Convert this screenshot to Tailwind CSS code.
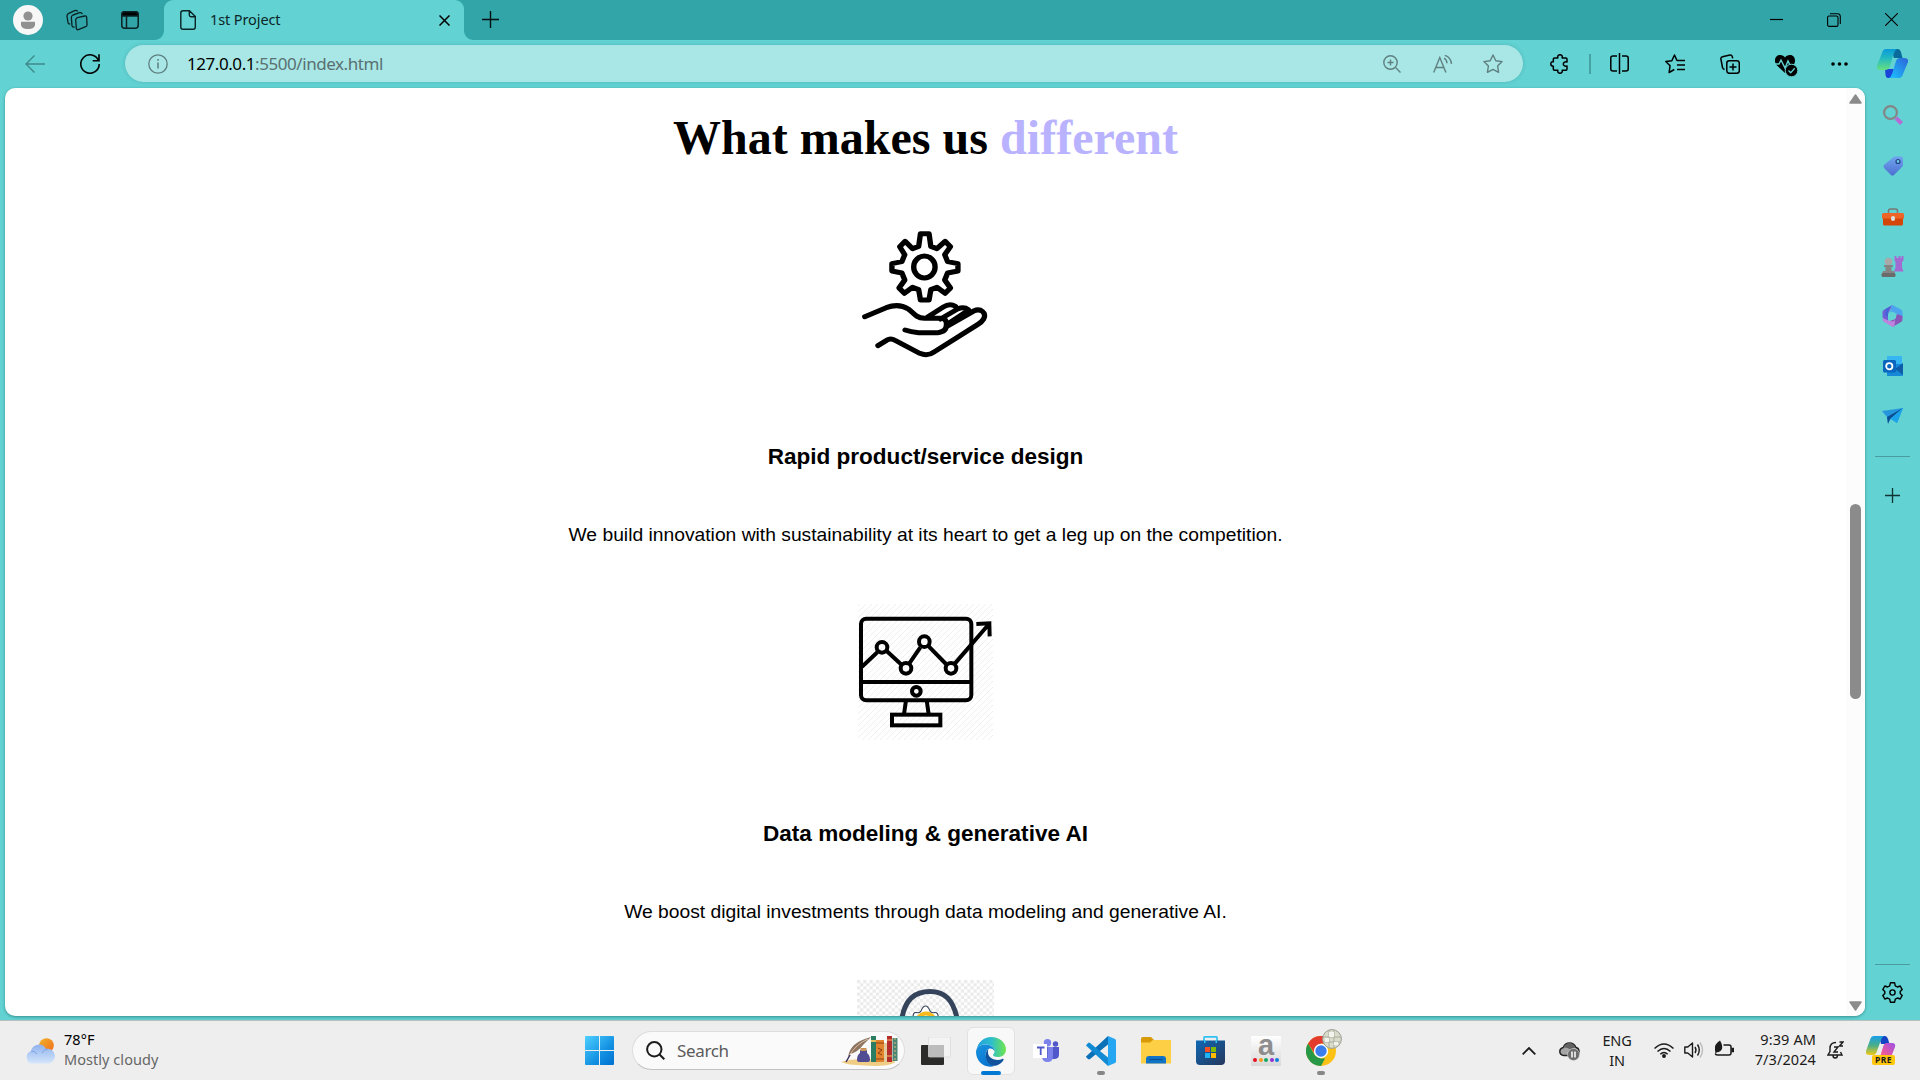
<!DOCTYPE html>
<html lang="en">
<head>
<meta charset="utf-8">
<title>1st Project</title>
<script src="https://cdn.jsdelivr.net/npm/@tailwindcss/browser@4"></script>
</head>
<body class="w-[1920px] h-[1080px] overflow-hidden flex flex-col bg-[#62d2d2] font-['Noto_Sans',sans-serif] text-black">

<!-- Title bar -->
<header class="h-10 shrink-0 flex items-center bg-[#32a5a8]">
  <svg class="ml-[13px] size-[30px]" viewBox="0 0 30 30"><circle cx="15" cy="15" r="15" fill="#f7f7f7"/><circle cx="15" cy="11" r="4.600" fill="#919191"/><path d="M8 16.800h14v2.600c0 3-3 4.600-7 4.600s-7-1.600-7-4.600z" fill="#919191"/></svg>
  <svg class="ml-[23px] size-[22px]" viewBox="0 0 66 66" fill="none" stroke="#0a2324" stroke-width="4" stroke-linejoin="round" stroke-linecap="round"><path d="M34 26l22-5q5-1 6 4l1 22q0 5-4 6l-22 9q-5 1-6-4l-2-25q0-5 5-7z"/><path d="M24 54q-5 1-6-4l-2-25q0-5 5-7l20-7q5-1 7 3"/><path d="M11 45q-4 0-5-4L3 21q0-5 4-7l19-9q5-2 8 1"/></svg>
  <svg class="ml-[33px] w-[18px] h-[18px]" viewBox="0 0 18 18" fill="none" stroke="#0a2324" stroke-width="1.500"><rect x=".8" y=".8" width="16.400" height="16.400" rx="3"/><path d="M.8 5V3.500Q1 .8 3.500.8h11q2.500 0 2.700 2.700V5z" fill="#000"/><path d="M5.500 5v12"/></svg>
  <div class="relative ml-[25px] w-[300px] h-10 rounded-t-[9px] bg-[#62d2d2] flex items-center">
    <svg class="absolute -left-[9px] bottom-0 size-[9px]" viewBox="0 0 9 9"><path d="M9 0v9H0a9 9 0 0 0 9-9z" fill="#62d2d2"/></svg>
    <svg class="absolute -right-[9px] bottom-0 size-[9px]" viewBox="0 0 9 9"><path d="M0 0v9h9a9 9 0 0 1-9-9z" fill="#62d2d2"/></svg>
    <svg class="ml-4 w-4 h-5 shrink-0" viewBox="0 0 16 20" fill="none" stroke="#0a2324" stroke-width="1.400" stroke-linejoin="round"><path d="M3 .8h6.500L15.300 6.500V17q0 2.200-2.200 2.200H3Q.8 19.200.8 17V3Q.8.8 3 .8zM9.300 1v4q0 1.700 1.700 1.700h4"/></svg>
    <span class="ml-[14px] -mt-0.5 text-[14.500px] tracking-[-0.1px] leading-5 text-[#0c2627]">1st Project</span>
    <svg class="mt-px ml-auto mr-[14px] size-[11px] shrink-0" viewBox="0 0 11 11" stroke="#000" stroke-width="1.500"><path d="M.5.5l10 10M10.500.5l-10 10"/></svg>
  </div>
  <svg class="ml-[18px] -mt-px size-[17px]" viewBox="0 0 17 17" stroke="#031011" stroke-width="1.400"><path d="M8.500 0v17M0 8.500h17"/></svg>
  <div class="ml-auto -mt-px flex items-center mr-[22px]">
    <svg class="w-[13px] h-[13px]" viewBox="0 0 13 13"><path d="M0 6.500h13" stroke="#000" stroke-width="1.200"/></svg>
    <svg class="ml-11 size-[14px]" viewBox="0 0 14 14" fill="none" stroke="#000" stroke-width="1.100"><rect x=".6" y="3" width="10.400" height="10.400" rx="1.500"/><path d="M3 .8h7.500q2.800 0 2.800 2.800V11"/></svg>
    <svg class="ml-11 size-[13px]" viewBox="0 0 13 13" stroke="#000" stroke-width="1.100"><path d="M0 0l13 13M13 0L0 13"/></svg>
  </div>
</header>

<div class="flex h-[980px] shrink-0">
  <div class="w-[1865px] flex flex-col">
    <!-- Toolbar -->
    <div class="h-12 shrink-0 flex items-center pb-px">
      <svg class="ml-[25px] w-5 h-[18px] shrink-0" viewBox="0 0 20 18" fill="none" stroke="#3f898a" stroke-width="1.400"><path d="M20 9H1M9.500.5L1 9l8.500 8.500"/></svg>
      <svg class="ml-[35px] size-5 shrink-0" viewBox="0 0 20 20" fill="none" stroke="#000" stroke-width="1.600"><path d="M18.500 6.500A9.200 9.200 0 1 0 19.200 10M19 .3v6.400h-6.300"/></svg>
      <div class="ml-[25px] w-[1398px] h-[37px] shrink-0 rounded-full bg-[#a8e7e5] flex items-center shadow-[0_0_4px_rgba(0,90,90,0.2)]">
        <svg class="ml-[23px] size-5" viewBox="0 0 20 20" fill="none" stroke="#5f7f80" stroke-width="1.300"><circle cx="10" cy="10" r="9.200"/><path d="M10 8.500v6M10 5v1.700" stroke-width="1.500"/></svg>
        <span class="ml-[19px] text-[17px] tracking-[-0.44px] leading-6 text-[#5a7071] whitespace-nowrap"><span class="text-black">127.0.0.1</span>:5500/index.html</span>
        <div class="ml-auto mr-[20px] flex items-center">
          <svg class="size-[18px]" viewBox="0 0 18 18" fill="none" stroke="#5f7f80" stroke-width="1.400"><circle cx="7.500" cy="7.500" r="6.700"/><path d="M12.500 12.500l5 5M7.500 4.500v6M4.500 7.500h6"/></svg>
          <svg class="ml-[32px] w-5 h-[18px]" viewBox="0 0 20 18" fill="none" stroke="#5f7f80" stroke-width="1.400"><path d="M.7 17.500L6.800 2.500l6.100 15M2.800 12.500h8M11 3.200q2.800 1.400 3 5M11.800.4q5.800 1.600 6.700 8.400"/></svg>
          <svg class="ml-[30px] size-5" viewBox="0 0 20 20" fill="none" stroke="#5f7f80" stroke-width="1.400" stroke-linejoin="round"><path d="M10 1l2.800 5.700 6.300.9-4.500 4.400 1 6.300L10 15.400l-5.600 2.900 1-6.300L.9 7.600l6.300-.9z"/></svg>
        </div>
      </div>
      <svg class="ml-[27px] size-5 shrink-0" viewBox="0 0 20 20" fill="none" stroke="#000" stroke-width="1.500" stroke-linejoin="round"><path d="M4.500 4h3.300C7.300 1.500 8.500.8 10 .8s2.700.9 2.200 3.200h3.600q1.200 0 1.200 1.200V8c-2.500-.5-3.700.6-3.700 2s1.200 2.500 3.700 2v3q0 1.200-1.200 1.200h-3.600c.5 2.300-.7 3-2.200 3s-2.700-.7-2.200-3H4.500q-1.200 0-1.200-1.200v-2.800C1.500 12.200.8 11.300.8 10s.7-2.500 2.500-2.200V5.200Q3.300 4 4.500 4z"/></svg>
      <div class="ml-[19px] w-0.5 h-5 shrink-0 bg-[#47a2a3]"></div>
      <svg class="ml-[19px] w-[19px] h-[21px] shrink-0" viewBox="0 0 19 21" fill="none" stroke="#000" stroke-width="1.500"><path d="M9.500 0v21M7 3H3Q.8 3 .8 5v11q0 2 2.200 2h4M12 3h4q2.200 0 2.200 2v11q0 2-2.200 2h-4"/></svg>
      <svg class="ml-[36px] w-5 h-5 shrink-0" viewBox="0 0 20 20" fill="none" stroke="#000" stroke-width="1.500" stroke-linejoin="round"><path d="M12 6.800L9.500 1 6.800 6.700.8 7.500l4.300 4.200-1 6.800 5.200-3M12 6.600h8M12 11h8M12 15.400h8"/></svg>
      <svg class="ml-[35px] w-5 h-5 shrink-0" viewBox="0 0 20 20" fill="none" stroke="#000" stroke-width="1.500"><rect x="6.800" y="6.800" width="12.500" height="12.500" rx="2.500"/><path d="M13 9.500v7M9.500 13h7M4.500 15.500Q3 15 2.500 13.500L.9 5q-.3-1.800 1.500-2.300L10 .9q1.700-.2 2.200 1.500l.5 2"/></svg>
      <svg class="ml-[34px] mt-0.5 w-6 h-6 shrink-0" viewBox="0 0 24 24"><path d="M11 20L2.500 12C-.5 8 1 2 6 2c2.500 0 4 1.300 5 2.500C12 3.300 13.500 2 16 2c5 0 6.500 6 3.500 10z"/><path d="M1 11h4l2-4 4 8 3-7 2 4h4" stroke="#62d2d2" stroke-width="1.400" fill="none"/><circle cx="17.500" cy="17.500" r="6.300" stroke="#62d2d2"/><path d="M14.500 17.500l2.200 2.200 4-4.400" stroke="#62d2d2" stroke-width="1.300" fill="none"/></svg>
      <svg class="ml-[33px] w-[17px] h-1 shrink-0" viewBox="0 0 17 4"><circle cx="2" cy="2" r="1.800"/><circle cx="8.500" cy="2" r="1.800"/><circle cx="15" cy="2" r="1.800"/></svg>
    </div>

    <!-- Web page viewport -->
    <main class="ml-[5px] w-[1860px] h-[928px] rounded-[10px] overflow-hidden bg-white shadow-[0_1px_3px_rgba(0,60,60,0.45)] flex">
      <section class="w-[1841px] flex flex-col items-center font-['Liberation_Sans',Arial,sans-serif]">
        <h1 class="mt-[22px] h-[55px] shrink-0 leading-[55px] text-5xl tracking-[0.03px] font-bold font-['Liberation_Serif',serif]">What makes us <span class="text-[#b9b2ff]">different</span></h1>
        <svg class="mt-[61px] w-[136px] h-[136px] shrink-0" viewBox="611 408 381 408" preserveAspectRatio="none" fill="none" stroke="#000" stroke-linejoin="round" stroke-linecap="round">
          <g stroke-width="15">
            <path d="M786 431h24l5 38 17 7 23-22 15 16-16 24 8 21 29 6v22l-29 6-8 21 16 24-15 16-23-18-17 7-5 31h-24l-5-31-17-7-23 18-15-16 16-24-8-21-28-6v-22l28-6 8-21-14-24 15-16 21 22 17-7z"/>
            <ellipse cx="797" cy="531" rx="30" ry="33"/>
            <path d="M630 680l60-27q35-14 62 4c15 12 20 26 45 28h48q14 2 14 18 0 23-25 25h-53q-22-2-38-8M859 710l76-47c20-10 37 6 28 24q-5 9-16 16L824 786q-18 14-40 4L715 751q-13-8-24 0l-24 16M806 681l44-30q18-12 34-2M842 687l48-30q18-8 30 2M859 704l55-39"/>
          </g>
        </svg>
        <h3 class="mt-[79px] shrink-0 leading-8 text-[22.560px] font-bold">Rapid product/service design</h3>
        <p class="mt-[46px] shrink-0 leading-8 text-[19.280px]">We build innovation with sustainability at its heart to get a leg up on the competition.</p>
        <svg class="mt-[53px] w-[136px] h-[136px] shrink-0" viewBox="54 12 408 408" fill="none" stroke="#000" stroke-width="12">
          <defs><pattern id="hatch" width="18" height="18" patternUnits="userSpaceOnUse"><path d="M-3 3l6-6M0 18L18 0M15 21l6-6" stroke="#efefef" stroke-width="3"/></pattern></defs>
          <rect x="54" y="12" width="405" height="408" fill="url(#hatch)" stroke="none"/>
          <rect x="63" y="56" width="331" height="245" rx="16"/>
          <path d="M63 246h331M198 301l-6 42M260 301l6 42"/>
          <rect x="156" y="344" width="145" height="32"/>
          <path d="M66 200l46-43M140 153l43 40M208 190l33-48M264 137l54 55M345 190L447 72M409 72l39-2 1 39"/>
          <circle cx="126" cy="142" r="16"/><circle cx="198" cy="205" r="16"/><circle cx="253" cy="125" r="16"/><circle cx="333" cy="205" r="16"/><circle cx="229" cy="274" r="13"/>
        </svg>
        <h3 class="mt-[78px] shrink-0 leading-8 text-[22.560px] font-bold">Data modeling &amp; generative AI</h3>
        <p class="mt-[46px] shrink-0 leading-8 text-[19.280px]">We boost digital investments through data modeling and generative AI.</p>
        <svg class="mt-[52px] w-[137px] h-[137px] shrink-0" viewBox="0 0 137 137">
          <defs><pattern id="check" width="6.300" height="6.300" patternUnits="userSpaceOnUse"><rect width="6.300" height="6.300" fill="#fff"/><path d="M0 0h3.150v3.150H0zM3.150 3.150H6.300V6.300H3.150z" fill="#eaeaea"/></pattern></defs>
          <rect width="137" height="137" fill="url(#check)"/>
          <path d="M45 38C48 20 58 11.500 73 11.500S96 20 100 38" fill="none" stroke="#35435a" stroke-width="5"/>
          <path d="M56 38q0-6 3-5.500 4 1 5-1.500 2-5 4.500-5t4.500 5q1 2.500 5 1.500 3-.5 3.500 5.500" fill="#fff" stroke="#35435a" stroke-width="1.100"/>
          <path d="M60 39q4-5.500 9-5.500t9 5.500" fill="none" stroke="#f9b91c" stroke-width="4"/>
        </svg>
      </section>
      <div class="w-[19px] bg-[#fcfcfc] flex flex-col items-center">
        <svg class="mt-[6px] w-[13px] h-[10px]" viewBox="0 0 13 10"><path d="M6.500 1L12 9H1z" fill="#8b8b8b" stroke="#8b8b8b" stroke-width="1.500" stroke-linejoin="round"/></svg>
        <div class="mt-[400px] w-[11px] h-[195px] rounded-full bg-[#8b8b8b]"></div>
        <svg class="mt-auto mb-[5px] w-[13px] h-[10px]" viewBox="0 0 13 10"><path d="M6.500 9L12 1H1z" fill="#8b8b8b" stroke="#8b8b8b" stroke-width="1.500" stroke-linejoin="round"/></svg>
      </div>
    </main>
  </div>

  <!-- Edge sidebar -->
  <aside class="w-[55px] flex flex-col items-center">
    <svg class="mt-[8px] size-[31px]" viewBox="0 0 31 31">
      <defs>
        <linearGradient id="c1" x1="0" y1="0" x2="0" y2="1"><stop offset="0" stop-color="#0a9ad8"/><stop offset=".4" stop-color="#20b7c4"/><stop offset="1" stop-color="#66df80"/></linearGradient>
        <linearGradient id="c2" x1="1" y1="0" x2="0" y2="1"><stop offset="0" stop-color="#2c63d8"/><stop offset="1" stop-color="#1cc4ff"/></linearGradient>
      </defs>
      <path d="M14 1h7q2 0 3 3l1.500 6H17z" fill="#0b6a9c"/><path d="M8 21h10l-3 9h-4q-2 0-2.500-3z" fill="#1b44d8"/>
      <path d="M9 1h11q-2 1-3 4l-4 13q-1 4-5 4H3q-4 0-3-4L5 5q1-4 4-4z" fill="url(#c1)"/>
      <path d="M22 30H12q2-1 3-4l4-13q1-3 4-3h4q5 0 4 4l-5 12q-1 4-4 4z" fill="url(#c2)"/>
    </svg>
    <svg class="mt-[26px] size-5" viewBox="0 0 20 20" fill="none"><path d="M13 13l5.500 5.500" stroke="#b56ad6" stroke-width="4"/><circle cx="7.500" cy="7.500" r="6.400" stroke="#858585" stroke-width="2.200"/></svg>
    <svg class="mt-[31px] size-5" viewBox="0 0 20 20"><defs><linearGradient id="tg" x1="0" y1="0" x2="0" y2="1"><stop offset="0" stop-color="#70a5ef"/><stop offset="1" stop-color="#4d6fd0"/></linearGradient></defs><path d="M12 .5h6q2 0 2 2V9q0 1-1 2l-8 8q-1.500 1-3 0l-7-7q-1-1.500 0-3L10 1.500Q11 .5 12 .5z" fill="url(#tg)"/><circle cx="15" cy="5.500" r="2" fill="#69c7e8" stroke="#243f83" stroke-width="1.200"/></svg>
    <svg class="mt-8 w-[22px] h-[18px]" viewBox="0 0 22 18"><path d="M6.500 6V3q0-2 2-2h5q2 0 2 2v3" fill="none" stroke="#777" stroke-width="1.500"/><rect y="5" width="22" height="6" rx="1.500" fill="#ee6427"/><path d="M1 10.500h20V16q0 1.500-1.500 1.500h-17Q1 17.500 1 16z" fill="#d44708"/><rect x="9" y="8" width="4" height="5" rx="2" fill="#ddd"/></svg>
    <svg class="mt-[29px] w-[23px] h-[23px]" viewBox="0 0 23 23"><path d="M13.500 1h2v2h2V1h2v2h1V1h2v4.500L21 7v5.500l1.500 4H13l1.500-4V7l-1-1.500z" fill="#a26bd2"/><circle cx="7.500" cy="6.500" r="3.800" fill="#a9a9a9"/><path d="M3 10h9v2h-1.500v4H13q1 1 1 3H1q0-2 1-3h2.500v-4H3z" fill="#858585"/><rect x=".5" y="18" width="14" height="4" rx="1.500" fill="#6b6b6b"/></svg>
    <svg class="mt-[27px] w-[21px] h-[22px]" viewBox="0 0 21 22"><path d="M10.500 0L6 9v7l-4.500-2Q.5 13 .5 11V7q0-1.500 1.500-2.300z" fill="#6d5fd6"/><path d="M10.500 0Q9 1 9 4l-1 3.500 2.500-1 10 6V7q0-1.500-1.500-2.500z" fill="#4ba4ed"/><path d="M10.500 0L9 1Q6 4 6 9v3L3 10l1-6z" fill="#4563d8"/><path d="M20.500 11v3.500q0 1.500-1.500 2.500l-8.500 5L8 16l5-2 2-5z" fill="#8a55b8"/><path d="M1 13l5 2.500 5 1 2-1.500-.5 6-2 1-9-5.500Q0 15 1 13z" fill="#bd83de"/><circle cx="10.700" cy="11.200" r="3.400" fill="#62d2d2"/></svg>
    <svg class="mt-[29px] w-5 h-5" viewBox="0 0 20 20"><rect x="4" y="0" width="15" height="12" rx="1" fill="#35b6f3"/><path d="M4 8l16 0v11q0 1-1 1H4z" fill="#1688d8"/><path d="M12 13l8-6v12z" fill="#0f5ca8"/><rect y="4" width="13" height="12.500" rx="1.500" fill="#0965bd"/><circle cx="6.300" cy="10.200" r="3.100" fill="none" stroke="#fff" stroke-width="1.800"/></svg>
    <svg class="mt-[32px] w-[21px] h-4" viewBox="0 0 21 16"><path d="M0 3L21 0 15 15 9 11l-3 4-1-6z" fill="#2696dd"/><path d="M5 9l16-9L8 11l-2 5z" fill="#0a4d91"/><path d="M8.500 10.500L21 0l-6 15z" fill="#1ba4ec"/></svg>
    <div class="mt-8 w-[35px] h-px bg-[#4a9c9e]"></div>
    <svg class="mt-[31px] size-[15px]" viewBox="0 0 15 15" stroke="#113435" stroke-width="1.300"><path d="M7.500 0v15M0 7.500h15"/></svg>
    <div class="mt-auto w-[35px] h-px bg-[#4a9c9e]"></div>
    <svg class="mt-[17px] mb-[17px] size-[21px]" viewBox="0 0 21 21" fill="none" stroke="#000" stroke-width="1.400" stroke-linejoin="round"><path d="M8.400.8h4.200l.7 3 2.100 1.200 2.800-1 2 3.600-2 2v1.800l2 2-2 3.600-2.800-1-2.100 1.200-.7 3H8.400l-.7-3L5.600 16l-2.800 1-2-3.600 2-2V9.600l-2-2L2.800 4l2.800 1 2.100-1.200z"/><circle cx="10.500" cy="10.500" r="2.600"/></svg>
  </aside>
</div>

<!-- Taskbar -->
<footer class="h-[60px] shrink-0 border-t border-[#b9bebe] bg-[#eeeeee] flex items-center">
  <svg class="ml-[25px] w-[30px] h-[26px]" viewBox="0 0 30 26"><defs><linearGradient id="sun" x1="0" y1="0" x2="1" y2="1"><stop offset="0" stop-color="#f0b328"/><stop offset="1" stop-color="#f26b1d"/></linearGradient><linearGradient id="cl" x1="0" y1="0" x2="0" y2="1"><stop offset="0" stop-color="#8fb2ee"/><stop offset="1" stop-color="#d5e6fb"/></linearGradient></defs><circle cx="21.500" cy="7.500" r="7.300" fill="url(#sun)"/><path d="M7 25.500a6.500 6.500 0 0 1-1-12.500 8 8 0 0 1 15-2 7.300 7.300 0 0 1 3 14.500z" fill="url(#cl)"/><path d="M6 13q4 0 6 3M17 15q2-4 6-4" stroke="#7ea3e6" stroke-width="1" fill="none"/></svg>
  <div class="ml-[9px] -mt-1 w-[512px] flex flex-col text-[14.500px] leading-5 tracking-[0.05px]">
    <span>78°F</span><span class="text-[#666]">Mostly cloudy</span>
  </div>
  <svg class="ml-[9px] size-[29px]" viewBox="0 0 29 29"><defs><linearGradient id="win" x1="0" y1="0" x2="1" y2="1"><stop offset="0" stop-color="#4fd0ff"/><stop offset=".6" stop-color="#1391e2"/><stop offset="1" stop-color="#0070d0"/></linearGradient></defs><path d="M1 0h13v14H0V1q0-1 1-1zM15 0h13q1 0 1 1v13H15zM0 15h14v14H1q-1 0-1-1zM15 15h14v13q0 1-1 1H15z" fill="url(#win)"/></svg>
  <div class="ml-[18px] w-[273px] h-[39px] rounded-full bg-[#fafafa] border border-[#dddddd] border-b-[#c2c2c2] flex items-center">
    <svg class="ml-[13px] size-[19px]" viewBox="0 0 19 19" fill="none" stroke="#1c1c1c" stroke-width="2"><circle cx="8.300" cy="8.300" r="7.200"/><path d="M13.300 13.300l5 5"/></svg>
    <span class="ml-[12px] text-[17px] leading-6 tracking-[-0.35px] text-[#5b5b5b]">Search</span>
    <svg class="ml-auto mr-[6px] w-[57px] h-[30px]" viewBox="0 0 57 30">
      <path d="M0 26q12-5 50-2 6 1 3 3-8 4-30 2.500Q6 29 0 26z" fill="#f0cd85"/>
      <path d="M7 21Q9 6 30 1q-5 5-8 8-5 7-13 9z" fill="#8f7560"/><path d="M8 20Q15 8 27 3" stroke="#d8c3aa" fill="none"/><path d="M5 26l4-7" stroke="#352e62" stroke-width="1.500"/>
      <path d="M19 14h7v3q3 2 3 7 0 2-2 2h-9q-2 0-2-2 0-5 3-7z" fill="#514b93"/><rect x="19.500" y="12" width="6" height="3" fill="#c99458"/>
      <rect x="30" y="0" width="5" height="26" fill="#2a7d63"/><rect x="30" y="4" width="5" height="2" fill="#e5be5d"/>
      <rect x="35" y="4" width="8" height="22" fill="#e2842d"/><path d="M35 7h8M35 23h8" stroke="#8d4013"/><path d="M37 12l4 2-4 3 4 2" stroke="#843b14" fill="none"/>
      <rect x="43" y="7" width="3" height="19" fill="#e2cc9d"/><rect x="46" y="0" width="5" height="26" fill="#b52e2b"/><path d="M46 4h5M46 20h5" stroke="#f2bd62"/>
      <rect x="51.500" y="2" width="5" height="23" fill="#4d8575"/><path d="M54 2v23" stroke="#d7be83" stroke-dasharray="2 2"/>
    </svg>
  </div>
  <svg class="ml-4 w-[30px] h-7" viewBox="0 0 30 28"><rect y="8" width="23" height="20" rx="1" fill="#2c2c2b"/><rect x="7.500" y="0" width="22" height="20" rx="1" fill="#f4f4f4" stroke="#d8d8d8" stroke-width=".7"/><rect x="7.500" y="8" width="15.500" height="12" fill="#bcbcbc"/></svg>
  <div class="ml-4 w-12 h-12 rounded-md bg-[#f8f8f8] border border-[#e2e2e2] flex flex-col items-center">
    <svg class="mt-[9px] size-[30px] shrink-0" viewBox="0 0 30 30"><defs><linearGradient id="e1" x1="0" y1=".3" x2="1" y2=".3"><stop offset="0" stop-color="#209fdc"/><stop offset=".5" stop-color="#2dbecc"/><stop offset="1" stop-color="#70e64b"/></linearGradient><linearGradient id="e2" x1="0" y1="0" x2=".6" y2="1"><stop offset="0" stop-color="#1a94df"/><stop offset="1" stop-color="#0873cf"/></linearGradient></defs>
      <path d="M.8 12C2 5 8 0 15 0c9 0 15 6 15 12.500 0 5-4 7.500-8 7.500-3 0-5-1-5-2s1.500-1 1.500-3.500C18.500 10 14 7.500 9.500 7.500 5 7.500 2 9.500.8 12z" fill="url(#e1)"/>
      <path d="M0 15C0 10.500 4 7.500 9.500 7.500c5 0 9 3 9 7 0 0-1-3-4-3-4 0-6 5-4 10 2 6 8 7.500 8 7.500C8 32 0 24 0 15z" fill="url(#e2)"/>
      <path d="M12.500 12c-4 3-3.500 10 0 14 5 5.500 12 2 15-3 .5-1-.3-1.500-1.300-1C22 24 13 23 12 16q-.2-2 .5-4z" fill="#10529c"/></svg>
    <div class="mt-[4px] w-5 h-1 shrink-0 rounded-full bg-[#0078d4]"></div>
  </div>
  <svg class="ml-[18px] w-[26px] h-[24px]" viewBox="0 0 26 24"><circle cx="14.500" cy="3.700" r="3.700" fill="#7b83eb"/><circle cx="22.500" cy="5" r="2.700" fill="#5059c9"/><path d="M17 8h9v7.500q0 4-4 4.500h-4z" fill="#5059c9"/><path d="M9 8h11v9q0 6-5.500 6T9 17z" fill="#7b83eb"/><path d="M9 8h5.500v11H9z" fill="#474eb5"/><rect y="5" width="14" height="14" fill="#fff"/><path d="M4 8.500h7.500M7.700 8.500V16" stroke="#5059c9" stroke-width="1.800"/></svg>
  <div class="relative ml-[27px] h-12 flex items-center">
    <svg class="size-[30px]" viewBox="0 0 30 30"><path d="M22 0l7 3q1 .5 1 1.500v21q0 1-1 1.500l-7 3z" fill="#25a6f2"/><path d="M0 20.500L22 0v8.500L4 23q-1 .8-2 0l-1.500-1.500z" fill="#0a70b8"/><path d="M0 9.500L2 7q1-.8 2 0l18 14.500V30z" fill="#138bd4"/></svg>
    <div class="absolute left-[11px] bottom-0 w-2 h-1 rounded-full bg-[#868686]"></div>
  </div>
  <svg class="ml-[25px] w-[30px] h-[27px]" viewBox="0 0 30 27"><path d="M0 2q0-2 2-2h8l3 3-2 4H0z" fill="#d99a08"/><path d="M0 5.500h9l3-2.500h18v23.500H0z" fill="#fdcf45"/><path d="M5 26.500V22q0-3 3-3h14q3 0 3 3v4.500z" fill="#1173c6"/><path d="M8.500 22.500h13" stroke="#084f92" stroke-width="1.200"/></svg>
  <svg class="ml-[25px] w-[29px] h-[29px]" viewBox="0 0 29 29"><path d="M8 5V1.500Q8 .8 9 .8h11q1 0 1 .7V5" fill="none" stroke="#31c1f2" stroke-width="1.700"/><defs><linearGradient id="st" x1="0" y1="0" x2="1" y2="1"><stop offset="0" stop-color="#0e68b5"/><stop offset="1" stop-color="#26365c"/></linearGradient></defs><path d="M0 4.500h29V25q0 4-4 4H4q-4 0-4-4z" fill="url(#st)"/><path d="M8 4h1.500v3H8zM19.500 4H21v3h-1.500z" fill="#31c1f2"/><path d="M9 11h5v5H9z" fill="#f25022"/><path d="M15 11h5v5h-5z" fill="#7fba00"/><path d="M9 17h5v5H9z" fill="#1fb3f3"/><path d="M15 17h5v5h-5z" fill="#ffb900"/></svg>
  <div class="ml-[26px] size-[30px] bg-linear-to-b from-white to-[#d9d9d9] flex flex-col items-center">
    <span class="h-[22px] leading-[19px] text-[29px] font-bold text-[#8d8d8d] font-['Liberation_Sans',sans-serif]">a</span>
    <div class="flex gap-[1.500px]"><i class="size-1 rounded-full bg-[#e81123]"></i><i class="size-1 rounded-full bg-[#f59b23]"></i><i class="size-1 rounded-full bg-[#16a765]"></i><i class="size-1 rounded-full bg-[#9031d3]"></i><i class="size-1 rounded-full bg-[#0d7edb]"></i></div>
  </div>
  <div class="relative ml-[25px] w-9 h-12 flex items-center">
    <svg class="size-[30px]" viewBox="0 0 30 30"><circle cx="15" cy="15" r="15" fill="#fbc116"/><path d="M2 7.500A15 15 0 0 1 28 7.500H15L9 18z" fill="#e33b2e"/><path d="M2 7.500L8.700 18.800Q11 22 15 22.500h4L15 30A15 15 0 0 1 2 7.500z" fill="#279847"/><circle cx="15" cy="15" r="7.200" fill="#fff"/><circle cx="15" cy="15" r="5.700" fill="#3b7ded"/></svg>
    <svg class="absolute left-4 top-[2px] size-5" viewBox="0 0 20 20"><circle cx="10" cy="10" r="9.400" fill="#d9dccb" stroke="#989b90"/><path d="M1 8h18M2 13h16M7 1v18M12 1v18" stroke="#a9ad9f"/><path d="M7 3h5v5H7zM3 9h4v4H3zM12 13h4v3h-4z" fill="#f2f3ec"/></svg>
    <div class="absolute left-[11px] bottom-0 w-2 h-1 rounded-full bg-[#868686]"></div>
  </div>
  <div class="ml-auto flex items-center">
    <svg class="w-[14px] h-2" viewBox="0 0 14 8" fill="none" stroke="#1b1b1b" stroke-width="1.800"><path d="M.7 7.300L7 1l6.300 6.300"/></svg>
    <svg class="ml-[23px] mt-px w-[21px] h-[19px]" viewBox="0 0 21 19"><path d="M5 13.500Q.8 13 .8 9.500q0-3 3.500-4Q6 1 10.500 1T17 5.500q3 .5 3 4 0 4-4 4z" fill="#a5a5a5" stroke="#222" stroke-width="1.500"/><path d="M4.300 5.500q4-.5 7 2l5-2Q14.500 1 10.500 1T4.300 5.500z" fill="#626262"/><circle cx="14.500" cy="12.500" r="6" fill="#6c6c6c" stroke="#ddd" stroke-width=".6"/><path d="M13 9.500v6M16 9.500v6" stroke="#fff" stroke-width="1.500"/></svg>
    <div class="ml-[22px] -mt-[2px] w-[30px] flex flex-col items-center text-[14.500px] leading-5 tracking-[-0.2px] text-[#1b1b1b]"><span>ENG</span><span>IN</span></div>
    <svg class="ml-[22px] -mt-px w-5 h-[15px]" viewBox="0 0 20 15" fill="none" stroke="#1b1b1b" stroke-width="1.500"><path d="M.5 5.500q9.500-9 19 0M3.500 8.500q6.500-6 13 0M6.300 11.300q3.700-3.500 7.400 0"/><circle cx="10" cy="13" r="1.200" fill="#1b1b1b"/></svg>
    <svg class="ml-[10px] -mt-px w-5 h-4" viewBox="0 0 20 16" fill="none" stroke="#1b1b1b" stroke-width="1.400" stroke-linejoin="round"><path d="M.8 5h3L8.500 1v14L3.800 11h-3zM11 5q2 3 0 6M13.500 2.500q3.500 5.500 0 11"/><path d="M16 .5q5 7.500 0 15" stroke="#bcbcbc"/></svg>
    <svg class="ml-[10px] -mt-[4px] w-5 h-[17px]" viewBox="0 0 20 17" fill="none" stroke="#1b1b1b" stroke-width="1.500"><path d="M9.500 5H15q2 0 2 2v6q0 2-2 2H3.500Q1.500 15 1.500 13.500"/><path d="M18 8.500h1.500v3H18z" fill="#1b1b1b"/><path d="M1 10Q0 4 6 .5q3 5 2 8.500-2 4-5 3l-1.500 2z" fill="#1b1b1b" stroke="none"/></svg>
    <div class="ml-[17px] -mt-1 w-[65px] flex flex-col items-end text-[14.500px] leading-5 tracking-[0.1px] text-[#1b1b1b] whitespace-nowrap"><span>9:39 AM</span><span>7/3/2024</span></div>
    <svg class="ml-[11px] -mt-[2px] w-[17px] h-[18px]" viewBox="0 0 17 18" fill="none" stroke="#1b1b1b" stroke-width="1.400"><path d="M9 1.500Q3 1.500 3 7.500v3L1 14h14l-1.500-3M6 14.500q0 2.500 2.200 2.500t2.200-2.500M7 6h4l-4 5h4M12.500 1H16l-3.500 4H16"/></svg>
    <svg class="ml-[22px] mr-[24px] w-[30px] h-[29px]" viewBox="0 0 30 29"><defs><linearGradient id="p1" x1="0" y1="0" x2="0" y2="1"><stop offset="0" stop-color="#199ee8"/><stop offset=".5" stop-color="#4aaf88"/><stop offset="1" stop-color="#f2c919"/></linearGradient><linearGradient id="p2" x1="1" y1="0" x2="0" y2="1"><stop offset="0" stop-color="#9a50e8"/><stop offset=".6" stop-color="#ef5a9a"/><stop offset="1" stop-color="#ff9950"/></linearGradient></defs><path d="M13 0h6q2 0 3 3l1.500 5H15z" fill="#1544c5"/><path d="M8 0h10q-2 1-3 4l-4 11q-1 4-4 4H3q-4 0-3-4L4 4q1-4 4-4z" fill="url(#p1)"/><path d="M20 25H10q3-1 4-4l3-10q1-4 4-4h5q4 0 3 4l-4 10q-1 4-4 4z" fill="url(#p2)"/><rect x="6" y="19" width="23" height="10" rx="2" fill="#ffc70d"/><text x="17.500" y="27.200" text-anchor="middle" font-family="Noto Sans" font-size="8.500" font-weight="bold" letter-spacing=".4" fill="#1b1b1b">PRE</text></svg>
  </div>
</footer>
</body>
</html>
